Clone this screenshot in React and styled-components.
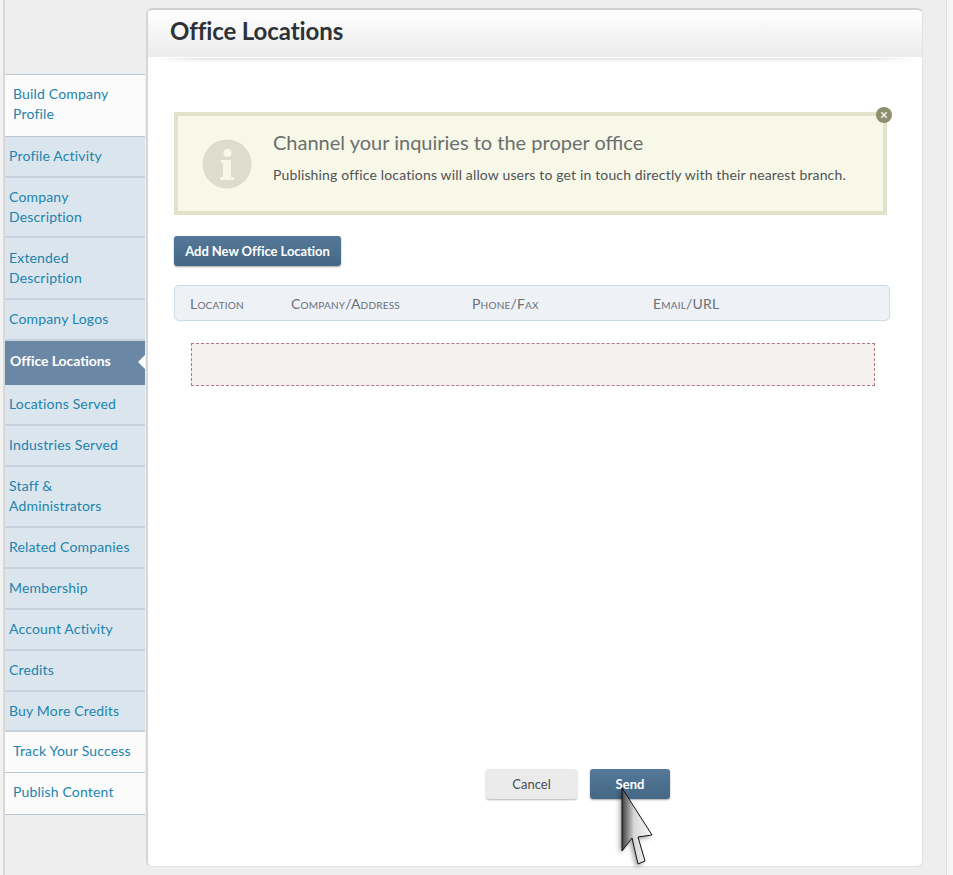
import React from 'react';
import styled, { createGlobalStyle } from 'styled-components';

const Global = createGlobalStyle`
  html, body { margin: 0; padding: 0; background: #eeeeee; }
  body { font-family: "Lato", "Noto Sans", "Liberation Sans", sans-serif; }
  * { box-sizing: border-box; }
`;

const Page = styled.div`
  width: 953px;
  height: 875px;
  display: flex;
  position: relative;
  overflow: hidden;
  background: #eeeeee;
`;
const LeftEdge = styled.div`
  width: 5px;
  flex: none;
  background: #f2f2f2;
  border-right: 2px solid #d8d8d8;
`;
const Sidebar = styled.nav`
  width: 141px;
  flex: none;
  padding-top: 74px;
  display: flex;
  flex-direction: column;
`;
const Item = styled.a`
  display: flex;
  align-items: center;
  position: relative;
  width: 140px;
  height: ${p => p.$h}px;
  font-size: 14px;
  line-height: 20px;
  letter-spacing: ${p => (p.$variant === 'active' ? '-0.08px' : '0.17px')};
  color: ${p => (p.$variant === 'active' ? '#ffffff' : '#1c84ae')};
  font-weight: ${p => (p.$variant === 'active' ? 700 : 400)};
  padding-left: ${p => (p.$variant === 'white' ? 8 : p.$variant === 'active' ? 5 : 4)}px;
  padding-bottom: ${p => p.$lift * 2}px;
  background: ${p =>
    p.$variant === 'white' ? '#fbfbfb' : p.$variant === 'active' ? '#6a88a6' : '#dbe5ed'};
  border-top: ${p => (p.$top ? '1px solid #b9c8d6' : 'none')};
  border-bottom: ${p =>
    p.$variant === 'active' ? 'none' : p.$variant === 'white' ? '1px solid #b9c8d6' : '2px solid #c5d1dc'};
`;
const Arrow = styled.span`
  position: absolute;
  right: 0;
  top: 14px;
  width: 0;
  height: 0;
  border-top: 7px solid transparent;
  border-bottom: 7px solid transparent;
  border-right: 7px solid #ffffff;
`;
const Panel = styled.main`
  width: 777px;
  height: 859px;
  margin-top: 8px;
  flex: none;
  background: #ffffff;
  border: 1px solid #e2e2e2;
  border-top: 2px solid #d0d0d0;
  border-left: 2px solid #d6d6d6;
  border-radius: 6px;
  display: flex;
  flex-direction: column;
`;
const Header = styled.header`
  position: relative;
  height: 47px;
  flex: none;
  border-radius: 5px 5px 0 0;
  background: linear-gradient(#ffffff, #ebebeb);
  padding: 0 0 6px 22px;
  display: flex;
  align-items: center;
  &::after {
    content: '';
    position: absolute;
    left: 6px;
    right: 6px;
    top: 48px;
    height: 4px;
    background: linear-gradient(90deg, #ffffff, #e0e0e0 6%, #e0e0e0 94%, #ffffff);
    -webkit-mask-image: linear-gradient(#000, transparent);
    mask-image: linear-gradient(#000, transparent);
  }
`;
const Title = styled.h1`
  margin: 0;
  font-size: 24px;
  font-weight: 700;
  color: #2e3236;
  letter-spacing: -0.1px;
`;
const Body = styled.div`
  flex: 1;
  padding: 55px 30px 0 26px;
  display: flex;
  flex-direction: column;
`;
const Notice = styled.section`
  position: relative;
  width: 713px;
  height: 103px;
  background: #f7f8e8;
  border: 4px solid #e1e2c9;
  display: flex;
  align-items: center;
  padding: 0 0 0 24px;
  gap: 21px;
`;
const NoticeIcon = styled.svg`
  width: 50px;
  height: 50px;
  flex: none;
`;
const NoticeText = styled.div`
  display: flex;
  flex-direction: column;
  gap: 10px;
  margin-top: -13px;
`;
const NoticeTitle = styled.div`
  font-size: 20px;
  line-height: 26px;
  color: #6b6f70;
`;
const NoticeLine = styled.div`
  font-size: 14px;
  line-height: 20px;
  color: #4f5356;
  letter-spacing: 0.15px;
`;
const CloseBadge = styled.svg`
  position: absolute;
  right: -9px;
  top: -9px;
  width: 16px;
  height: 16px;
`;
const PrimaryButton = styled.button`
  font-family: inherit;
  border: none;
  border-radius: 3px;
  color: #ffffff;
  font-size: 13px;
  font-weight: 700;
  background: linear-gradient(#557898, #446886);
  box-shadow: 0 1px 2px rgba(0, 0, 0, 0.35);
  width: ${p => p.$w}px;
  height: 30px;
  padding: 0;
`;
const AddButton = styled(PrimaryButton)`
  margin-top: 21px;
  align-self: flex-start;
  letter-spacing: -0.05px;
`;
const TableHead = styled.div`
  margin-top: 19px;
  width: 716px;
  height: 36px;
  background: #eef1f6;
  border: 1px solid #cddbe8;
  border-radius: 5px;
  display: grid;
  grid-template-columns: 101px 181px 181px 1fr;
  align-items: center;
  padding-left: 15px;
`;
const HeadCell = styled.div`
  font-size: 14px;
  color: #6a7078;
  font-variant: small-caps;
  letter-spacing: 0.2px;
`;
const Empty = styled.div`
  margin: 22px 0 0 17px;
  width: 684px;
  height: 43px;
  background: #f5f1f1;
  border: 1px dashed #b27a80;
`;
const Actions = styled.div`
  margin-top: auto;
  margin-bottom: 67px;
  padding-left: 312px;
  display: flex;
  gap: 13px;
`;
const CancelButton = styled.button`
  font-family: inherit;
  border: none;
  border-radius: 3px;
  width: 91px;
  height: 30px;
  padding: 0;
  font-size: 13px;
  color: #4a4f52;
  background: #ebebeb;
  box-shadow: 0 1px 2px rgba(0, 0, 0, 0.3);
`;
const RightGutter = styled.div`
  width: 23px;
  flex: none;
`;
const RightEdge = styled.div`
  flex: 1;
  background: #f6f6f6;
  border-left: 1px solid #dedede;
`;
const Cursor = styled.svg`
  position: absolute;
  left: 615px;
  top: 786px;
  width: 44px;
  height: 84px;
  filter: drop-shadow(-2px 2px 2px rgba(0, 0, 0, 0.35));
`;

const items = [
  { t: ['Build Company', 'Profile'], h: 63, v: 'white', top: true, lift: 2 },
  { t: ['Profile Activity'], h: 41, lift: 1 },
  { t: ['Company', 'Description'], h: 60, lift: 0 },
  { t: ['Extended', 'Description'], h: 62, lift: 0 },
  { t: ['Company Logos'], h: 41, lift: 1 },
  { t: ['Office Locations'], h: 44, v: 'active', lift: 2 },
  { t: ['Locations Served'], h: 41, lift: 1 },
  { t: ['Industries Served'], h: 41, lift: 1 },
  { t: ['Staff &', 'Administrators'], h: 61, lift: 1 },
  { t: ['Related Companies'], h: 41, lift: 1 },
  { t: ['Membership'], h: 41, lift: 1 },
  { t: ['Account Activity'], h: 41, lift: 1 },
  { t: ['Credits'], h: 41, lift: 1 },
  { t: ['Buy More Credits'], h: 40, lift: 0 },
  { t: ['Track Your Success'], h: 41, v: 'white', lift: 1 },
  { t: ['Publish Content'], h: 42, v: 'white', lift: 2 },
];

export default function App() {
  return (
    <Page>
      <Global />
      <LeftEdge />
      <Sidebar>
        {items.map(i => (
          <Item key={i.t[0]} $h={i.h} $variant={i.v} $top={i.top} $lift={i.lift}>
            <span>
              {i.t.map((l, n) => (
                <React.Fragment key={l}>
                  {n > 0 && <br />}
                  {l}
                </React.Fragment>
              ))}
            </span>
            {i.v === 'active' && <Arrow />}
          </Item>
        ))}
      </Sidebar>
      <Panel>
        <Header>
          <Title>Office Locations</Title>
        </Header>
        <Body>
          <Notice>
            <NoticeIcon viewBox="0 0 50 50">
              <circle cx="25" cy="25" r="24.5" fill="#dcddcd" />
              <circle cx="25.5" cy="14" r="4" fill="#f7f8e8" />
              <path d="M19 21h10v17h3v3H18v-3h3V24h-2z" fill="#f7f8e8" />
            </NoticeIcon>
            <NoticeText>
              <NoticeTitle>Channel your inquiries to the proper office</NoticeTitle>
              <NoticeLine>
                Publishing office locations will allow users to get in touch directly with their nearest branch.
              </NoticeLine>
            </NoticeText>
            <CloseBadge viewBox="0 0 16 16">
              <circle cx="8" cy="8" r="8" fill="#8e8f6e" />
              <path d="M5.3 5.3l5.4 5.4M10.7 5.3l-5.4 5.4" stroke="#f2f2ea" strokeWidth="1.5" />
            </CloseBadge>
          </Notice>
          <AddButton $w={167}>Add New Office Location</AddButton>
          <TableHead>
            <HeadCell>Location</HeadCell>
            <HeadCell>Company/Address</HeadCell>
            <HeadCell>Phone/Fax</HeadCell>
            <HeadCell>Email/URL</HeadCell>
          </TableHead>
          <Empty />
          <Actions>
            <CancelButton>Cancel</CancelButton>
            <PrimaryButton $w={80}>Send</PrimaryButton>
          </Actions>
        </Body>
      </Panel>
      <RightGutter />
      <RightEdge />
      <Cursor viewBox="0 0 44 84">
        <defs>
          <linearGradient id="cur" x1="0" x2="1" y1="0" y2="0">
            <stop offset="0" stopColor="#3e3e3e" />
            <stop offset="0.4" stopColor="#d8d8d8" />
            <stop offset="1" stopColor="#f7f9fc" />
          </linearGradient>
        </defs>
        <path d="M7 2L37 49 23 51 30 75 23 78 17 52 7 65z" fill="url(#cur)" stroke="#111" strokeWidth="1" strokeLinejoin="round" />
      </Cursor>
    </Page>
  );
}
